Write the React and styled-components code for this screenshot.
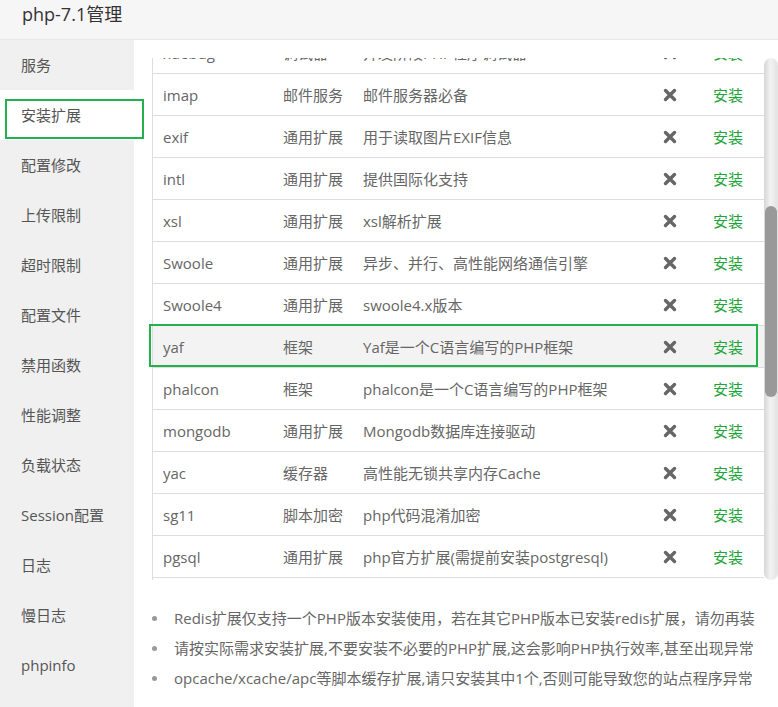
import React, { useLayoutEffect, useRef } from 'react';
import styled, { createGlobalStyle } from 'styled-components';

const GlobalStyle = createGlobalStyle`
  html, body {
    margin: 0;
    padding: 0;
    background: #fff;
  }
  body {
    font-family: "Open Sans", "Noto Sans CJK SC", sans-serif;
    color: #666;
  }
  * {
    box-sizing: border-box;
  }
`;

const ROW_H = 42;
const VIEW_H = 522;
const SCROLL_TOP = 404;

const Page = styled.div`
  width: 778px;
  height: 707px;
  display: flex;
  flex-direction: column;
  overflow: hidden;
  background: #fff;
`;

const TitleBar = styled.div`
  height: 40px;
  flex-shrink: 0;
  padding: 3px 0 0 22px;
  background: #f6f6f6;
  border-bottom: 1px solid #e8e8e8;
  font-size: 18px;
  line-height: 22px;
  color: #333;
`;

const Body = styled.div`
  flex: 1;
  display: flex;
  min-height: 0;
`;

const Sidebar = styled.ul`
  width: 134px;
  flex-shrink: 0;
  margin: 0;
  padding: 0;
  list-style: none;
  background: #f0f0f0;
  position: relative;
  z-index: 2;
`;

const NavItem = styled.li`
  position: relative;
  height: 50px;
  line-height: 50px;
  padding-left: 21px;
  font-size: 15px;
  color: #555;
  background: ${p => (p.$active ? '#fff' : 'transparent')};

  ${p =>
    p.$active &&
    `
    &::after {
      content: '';
      position: absolute;
      left: 5px;
      right: -10px;
      top: 9px;
      bottom: 1px;
      border: 2px solid #22b14c;
    }
  `}
`;

const Content = styled.div`
  flex: 1;
  min-width: 0;
  padding-top: 18px;
  padding-left: 12px;
`;

const ScrollFrame = styled.div`
  display: flex;
  height: ${VIEW_H}px;
`;

const Viewport = styled.div`
  flex: 1;
  min-width: 0;
  overflow: hidden;
  padding-left: 6px;
`;

const Track = styled.div`
  width: 14px;
  flex-shrink: 0;
  border-radius: 7px;
  background: linear-gradient(to right, #d6d6d6, #f2f2f2 45%, #e2e2e2);
  padding: 0 1px;
`;

const Thumb = styled.div`
  border-radius: 6px;
  background: #999;
`;

const Table = styled.div`
  border-left: 1px solid #ddd;
`;

const Row = styled.div`
  position: relative;
  display: grid;
  grid-template-columns: 120px 80px 1fr 44px 72px;
  align-items: center;
  height: ${ROW_H}px;
  padding-left: 10px;
  border-bottom: 1px solid #ddd;
  font-size: 15px;
  color: #666;
  white-space: nowrap;
  background: ${p => (p.$selected ? '#f3f3f3' : '#fff')};

  ${p =>
    p.$selected &&
    `
    &::after {
      content: '';
      position: absolute;
      left: -4px;
      right: 6px;
      top: -2px;
      bottom: 0;
      border: 2px solid #22b14c;
    }
  `}
`;

const Cell = styled.span`
  overflow: hidden;
`;

const StatusCell = styled.span`
  display: flex;
  justify-content: center;
`;

const InstallLink = styled.a`
  padding-left: 21px;
  color: #20a53a;
  text-decoration: none;
  cursor: pointer;
`;

const Notes = styled.ul`
  margin: 23px 0 0;
  padding: 0 0 0 6px;
  list-style: none;
`;

const Note = styled.li`
  position: relative;
  line-height: 30px;
  height: 30px;
  padding-left: 22px;
  font-size: 15px;
  color: #666;
  white-space: nowrap;
  overflow: hidden;

  &::before {
    content: '';
    position: absolute;
    left: 0;
    top: 13px;
    width: 5px;
    height: 5px;
    border-radius: 50%;
    background: #999;
  }
`;

const CrossIcon = () => (
  <svg width="14" height="14" viewBox="0 0 14 14">
    <path
      d="M2.5 2.5 L11.5 11.5 M11.5 2.5 L2.5 11.5"
      stroke="#666"
      strokeWidth="3.4"
      strokeLinecap="round"
    />
  </svg>
);

const menu = [
  '服务',
  '安装扩展',
  '配置修改',
  '上传限制',
  '超时限制',
  '配置文件',
  '禁用函数',
  '性能调整',
  '负载状态',
  'Session配置',
  '日志',
  '慢日志',
  'phpinfo'
];

const extensions = [
  ['ionCube', '通用扩展', '用于解密ionCube Encoder加密的代码'],
  ['fileinfo', '通用扩展', '用于获取文件类型信息'],
  ['opcache', '缓存器', '用于加速PHP脚本'],
  ['memcache', '缓存器', '强大的内容缓存器'],
  ['memcached', '缓存器', '比memcache支持更多高级功能'],
  ['redis', '缓存器', '更强大的内容缓存器'],
  ['apcu', '缓存器', '脚本缓存器'],
  ['imagemagick', '通用扩展', 'Imagick高性能图形库'],
  ['ZendGuard', '加密', '用于解密ZendGuard加密的代码'],
  ['xdebug', '调试器', '开发阶段PHP程序调试器'],
  ['imap', '邮件服务', '邮件服务器必备'],
  ['exif', '通用扩展', '用于读取图片EXIF信息'],
  ['intl', '通用扩展', '提供国际化支持'],
  ['xsl', '通用扩展', 'xsl解析扩展'],
  ['Swoole', '通用扩展', '异步、并行、高性能网络通信引擎'],
  ['Swoole4', '通用扩展', 'swoole4.x版本'],
  ['yaf', '框架', 'Yaf是一个C语言编写的PHP框架'],
  ['phalcon', '框架', 'phalcon是一个C语言编写的PHP框架'],
  ['mongodb', '通用扩展', 'Mongodb数据库连接驱动'],
  ['yac', '缓存器', '高性能无锁共享内存Cache'],
  ['sg11', '脚本加密', 'php代码混淆加密'],
  ['pgsql', '通用扩展', 'php官方扩展(需提前安装postgresql)'],
  ['ssh2', '通用扩展', 'php连接ssh服务器'],
  ['xhprof', '调试器', '性能分析工具'],
  ['pdo_sqlsrv', '通用扩展', 'SQL Server数据库驱动'],
  ['sqlsrv', '通用扩展', 'SQL Server数据库驱动'],
  ['zip', '通用扩展', 'zip压缩解压支持'],
  ['bz2', '通用扩展', 'bz2压缩支持'],
  ['gmp', '通用扩展', '高精度数学运算'],
  ['readline', '通用扩展', '命令行交互支持'],
  ['sodium', '通用扩展', '现代加密库'],
  ['igbinary', '通用扩展', '高效的序列化扩展'],
  ['protobuf', '通用扩展', 'Protocol Buffers支持'],
  ['grpc', '通用扩展', 'gRPC远程调用支持']
];

const notes = [
  'Redis扩展仅支持一个PHP版本安装使用，若在其它PHP版本已安装redis扩展，请勿再装',
  '请按实际需求安装扩展,不要安装不必要的PHP扩展,这会影响PHP执行效率,甚至出现异常',
  'opcache/xcache/apc等脚本缓存扩展,请只安装其中1个,否则可能导致您的站点程序异常'
];

const App = () => {
  const viewRef = useRef(null);

  useLayoutEffect(() => {
    if (viewRef.current) viewRef.current.scrollTop = SCROLL_TOP;
  }, []);

  const contentH = extensions.length * ROW_H;
  const thumbH = Math.round((VIEW_H * VIEW_H) / contentH);
  const thumbTop = Math.round((SCROLL_TOP / contentH) * VIEW_H);

  return (
    <Page>
      <GlobalStyle />
      <TitleBar>php-7.1管理</TitleBar>
      <Body>
        <Sidebar>
          {menu.map(item => (
            <NavItem key={item} $active={item === '安装扩展'}>
              {item}
            </NavItem>
          ))}
        </Sidebar>
        <Content>
          <ScrollFrame>
            <Viewport ref={viewRef}>
              <Table>
                {extensions.map(([name, type, desc]) => (
                  <Row key={name} $selected={name === 'yaf'}>
                    <Cell>{name}</Cell>
                    <Cell>{type}</Cell>
                    <Cell>{desc}</Cell>
                    <StatusCell>
                      <CrossIcon />
                    </StatusCell>
                    <InstallLink>安装</InstallLink>
                  </Row>
                ))}
              </Table>
            </Viewport>
            <Track>
              <Thumb style={{ marginTop: thumbTop, height: thumbH }} />
            </Track>
          </ScrollFrame>
          <Notes>
            {notes.map(n => (
              <Note key={n}>{n}</Note>
            ))}
          </Notes>
        </Content>
      </Body>
    </Page>
  );
};

export default App;
